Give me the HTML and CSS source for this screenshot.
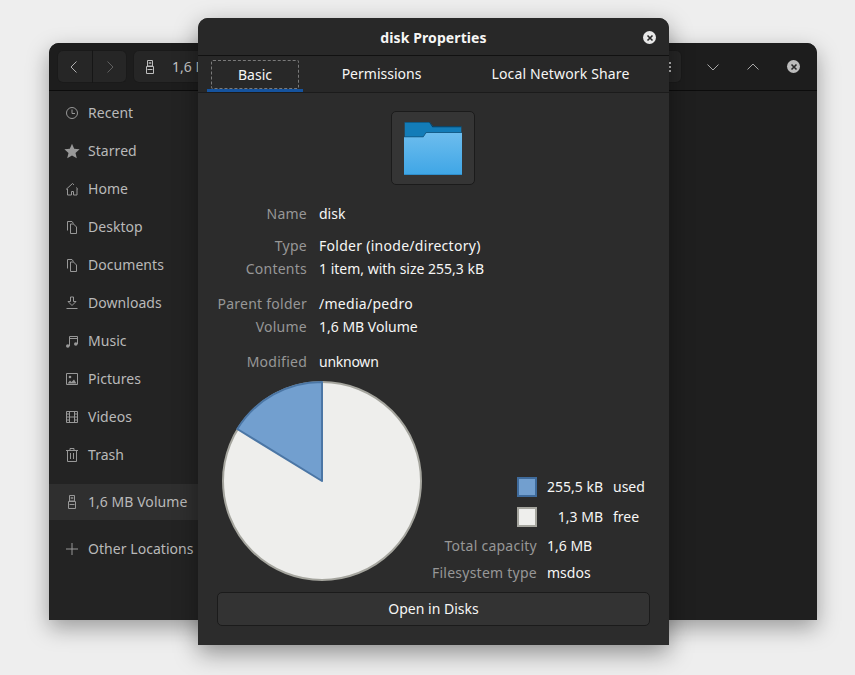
FILE: index.html
```html
<!DOCTYPE html>
<html lang="en">
<head>
    <meta charset="UTF-8">
    <title>disk Properties</title>
    <link rel="stylesheet" href="styles.css">
</head>
<body>

<!-- Files window, behind the dialog -->
<div class="window files">
    <div class="files-header">
        <div class="btn-group">
            <button class="nav-btn">
                <svg width="16" height="16" viewBox="0 0 16 16"><path d="M10.5 2.5 5 8l5.5 5.5" class="line"/></svg>
            </button>
            <button class="nav-btn dim">
                <svg width="16" height="16" viewBox="0 0 16 16"><path d="M5.5 2.5 11 8l-5.5 5.5" class="line"/></svg>
            </button>
        </div>
        <div class="path-bar">
            <svg class="path-icon" width="16" height="16" viewBox="0 0 16 16"><path d="M5.5 1.5h5v5.5h-5zM4.5 7.500h7v7h-7zM5.500 10.500h5" class="line"/><path d="M6.800 3h.9v2h-.9zM8.300 3h.9v2h-.9z" class="fill"/></svg>
            <span>1,6 MB Volume</span>
            <span class="path-menu"></span>
        </div>
        <div class="win-controls">
            <svg width="16" height="16" viewBox="0 0 16 16"><path d="M2.500 5.500 8 11l5.500-5.500" class="line"/></svg>
            <svg width="16" height="16" viewBox="0 0 16 16"><path d="M2.500 10.500 8 5l5.500 5.500" class="line"/></svg>
            <span class="close-btn small"><svg width="14" height="14" viewBox="0 0 14 14"><path d="M4.500 4.500l5 5M9.500 4.500l-5 5" class="x"/></svg></span>
        </div>
    </div>
    <ul class="sidebar">
        <li><svg width="16" height="16" viewBox="0 0 16 16"><circle cx="8" cy="8" r="5.500" class="line"/><path d="M8 4.500V8.500h3" class="line"/></svg>Recent</li>
        <li><svg width="16" height="16" viewBox="0 0 16 16"><path d="M8 .8l2.200 5 5.400.5-4.100 3.600 1.300 5.300L8 12.400l-4.800 2.800 1.300-5.300L.4 6.300l5.400-.5z" class="fill"/></svg>Starred</li>
        <li><svg width="16" height="16" viewBox="0 0 16 16"><path d="M2 8.500 8.500 2.500l1.500 1.400M14 8.300l-2-1.800M3.500 8v6h4v-3.500h2v3.500h3.500V8" class="line"/></svg>Home</li>
        <li><svg width="16" height="16" viewBox="0 0 16 16"><path d="M3.500 11.500v-9h4.500l1.500 2M6.500 14.500v-9.500h3l3 3v6.500z" class="line"/></svg>Desktop</li>
        <li><svg width="16" height="16" viewBox="0 0 16 16"><path d="M3.500 11.500v-9h4.500l1.500 2M6.500 14.500v-9.500h3l3 3v6.500z" class="line"/></svg>Documents</li>
        <li><svg width="16" height="16" viewBox="0 0 16 16"><path d="M2.500 13.500h11M6.500 2v4.500H4l4 4 4-4H9.500V2z" class="line"/></svg>Downloads</li>
        <li><svg width="16" height="16" viewBox="0 0 16 16"><path d="M5.500 13V3.500h8V11M5.500 5.500h8" class="line"/><circle cx="3.800" cy="13" r="1.800" class="fill"/><circle cx="11.800" cy="11" r="1.800" class="fill"/></svg>Music</li>
        <li><svg width="16" height="16" viewBox="0 0 16 16"><path d="M2.500 2.500h11v11h-11z" class="line"/><circle cx="6" cy="6" r="1.300" class="fill"/><path d="M3.500 12.500l2.500-3 1.500 1.500 2.500-2.500 2.500 4z" class="fill"/></svg>Pictures</li>
        <li><svg width="16" height="16" viewBox="0 0 16 16"><path d="M2.500 2.500h11v11h-11zM5.500 2.500v11M10.500 2.500v11M5.500 8h5M2.500 5h3M2.500 8h3M2.500 11h3M10.500 5h3M10.500 8h3M10.500 11h3" class="line"/></svg>Videos</li>
        <li><svg width="16" height="16" viewBox="0 0 16 16"><path d="M2 3.500h12M6 3.500V1.500h4v2M3.500 3.500v11h9v-11M6.500 6v6M9.500 6v6" class="line"/></svg>Trash</li>
        <li class="active"><svg width="16" height="16" viewBox="0 0 16 16"><path d="M5.500 1.500h5v5.500h-5zM4.500 7.500h7v7h-7zM5.500 10.500h5" class="line"/><path d="M6.800 3h.9v2h-.9zM8.300 3h.9v2h-.9z" class="fill"/></svg>1,6 MB Volume</li>
        <li><svg width="16" height="16" viewBox="0 0 16 16"><path d="M8 2v12M2 8h12" class="line"/></svg>Other Locations</li>
    </ul>
</div>

<!-- Properties dialog -->
<div class="window dialog">
    <div class="dialog-title">
        <span>disk Properties</span>
        <span class="close-btn"><svg width="14" height="14" viewBox="0 0 14 14"><path d="M4.500 4.500l5 5M9.500 4.500l-5 5" class="x"/></svg></span>
    </div>
    <div class="tabs">
        <div class="tab active"><span>Basic</span></div>
        <div class="tab perm"><span>Permissions</span></div>
        <div class="tab share"><span>Local Network Share</span></div>
    </div>
    <div class="dialog-body">
        <div class="icon-box">
            <svg width="60" height="54" viewBox="0 0 60 54">
                <defs>
                    <linearGradient id="folderFront" x1="0" y1="0" x2="0" y2="1">
                        <stop offset="0" stop-color="#6dbdee"/>
                        <stop offset="1" stop-color="#3fa6e6"/>
                    </linearGradient>
                </defs>
                <path d="M1.700 0h25l3.300 4.300h28.300V15H1.700z" fill="#137cb8"/>
                <path d="M1.700 0h25l3.300 4.300h28.300v1H29.500L26.200.6H1.700z" fill="#0b3a58"/>
                <path d="M1 15h19l3-4.300h36v42H1z" fill="url(#folderFront)"/>
                <path d="M1 14.500h19l3-4.300h36v.8H23.300l-3 4.300H1z" fill="#0e4f78"/>
                <rect x="1" y="52" width="58" height="1" fill="#2f8fcc"/>
            </svg>
        </div>

        <div class="info">
            <span class="label">Name</span><span>disk</span>
            <span class="label gap-a">Type</span><span class="gap-a stretch">Folder (inode/directory)</span>
            <span class="label">Contents</span><span>1 item, with size 255,3 kB</span>
            <span class="label gap-b">Parent folder</span><span class="gap-b stretch">/media/pedro</span>
            <span class="label">Volume</span><span>1,6 MB Volume</span>
            <span class="label gap-b">Modified</span><span class="gap-b squeeze">unknown</span>
        </div>

        <div class="usage">
            <svg class="pie" width="202" height="202" viewBox="0 0 202 202">
                <circle cx="101" cy="101" r="99" fill="#eeeeec" stroke="#a5a59e" stroke-width="2"/>
                <path d="M101 101V2A99 99 0 0 0 16.300 49z" fill="#729fcf" stroke="#4b76a5" stroke-width="2" stroke-linejoin="round"/>
            </svg>
            <div class="legend">
                <span class="swatch used"></span><span class="size">255,5 kB</span><span>used</span>
                <span class="swatch free"></span><span class="size">1,3 MB</span><span>free</span>
            </div>
            <div class="fs-info">
                <span class="label">Total capacity</span><span>1,6 MB</span>
                <span class="label">Filesystem type</span><span>msdos</span>
            </div>
        </div>

        <button class="disks-btn">Open in Disks</button>
    </div>
</div>

</body>
</html>
```

FILE: styles.css
```css
/* Page */
html, body {
    margin: 0;
    height: 100%;
}

body {
    position: relative;
    width: 855px;
    height: 675px;
    overflow: hidden;
    background: #eeeeee;
    font-family: 'Noto Sans', sans-serif;
    font-size: 14px;
    color: #f6f6f5;
}

.window {
    position: absolute;
    box-sizing: border-box;
    border-radius: 10px 10px 0 0;
}

button {
    font: inherit;
    color: inherit;
}

svg {
    display: block;
    flex: none;
}

.line {
    fill: none;
    stroke: currentColor;
    stroke-width: 1;
}

.fill {
    fill: currentColor;
}

.x {
    fill: none;
    stroke: #2a2a2a;
    stroke-width: 1.6;
}

/* Files window */
.files {
    display: flex;
    flex-direction: column;
    left: 49px;
    top: 43px;
    width: 768px;
    height: 577px;
    background: #1f1f1f;
    overflow: hidden;
    box-shadow: 0 8px 22px rgba(0, 0, 0, 0.35);
}

.files-header {
    display: flex;
    align-items: center;
    flex: none;
    height: 48px;
    padding: 0 8px;
    box-sizing: border-box;
    background: #1d1d1d;
    border-bottom: 1px solid #0c0c0c;
    color: #a8a8a8;
}

.btn-group {
    display: flex;
    height: 33px;
    border-radius: 6px;
    background: #262626;
    box-shadow: inset 0 0 0 1px #1a1a1a;
}

.nav-btn {
    width: 35px;
    padding: 0 0 0 9px;
    background: none;
    border: 0;
    color: #b0b0b0;
}

.nav-btn + .nav-btn {
    border-left: 1px solid #161616;
}

.nav-btn.dim {
    color: #5f5f5f;
}

.path-bar {
    display: flex;
    align-items: center;
    width: 540px;
    height: 33px;
    margin-left: 6px;
    padding-left: 9px;
    border-radius: 6px;
    background: #262626;
    box-shadow: inset 0 0 0 1px #1a1a1a;
    color: #c4c4c4;
}

.path-icon {
    margin-right: 14px;
    color: #bdbdbd;
}

.path-menu {
    margin-left: auto;
    margin-right: 11px;
    width: 2px;
    height: 2px;
    background: #b8b8b8;
    box-shadow: 0 -4px 0 #b8b8b8, 0 4px 0 #b8b8b8;
}

.win-controls {
    display: flex;
    align-items: center;
    gap: 24px;
    margin-left: 23px;
    color: #a8a8a8;
}

.win-controls .close-btn {
    margin-left: 2px;
}

.sidebar {
    flex: 1;
    width: 240px;
    list-style: none;
    margin: 0;
    padding: 3px 0 0;
    background: #232323;
    color: #b9b9b9;
    letter-spacing: 0.05px;
}

.sidebar li {
    display: flex;
    align-items: center;
    gap: 8px;
    height: 38px;
    padding-left: 15px;
    line-height: 38px;
}

.sidebar svg {
    color: #989898;
}

.sidebar .active {
    height: 36px;
    margin-top: 10px;
    background: #2f2f2f;
}

.sidebar .active + li {
    margin-top: 10px;
}

.close-btn {
    display: flex;
    align-items: center;
    justify-content: center;
    width: 13px;
    height: 13px;
    border-radius: 50%;
    background: #e8e8e8;
}

.close-btn.small {
    background: #bcbcbc;
}

/* Properties dialog */
.dialog {
    left: 198px;
    top: 18px;
    width: 471px;
    height: 627px;
    background: #2c2c2c;
    box-shadow: 0 8px 24px rgba(0, 0, 0, 0.4);
}

.dialog-title {
    display: flex;
    justify-content: center;
    align-items: center;
    position: relative;
    height: 38px;
    padding-top: 2px;
    box-sizing: border-box;
    background: #282828;
    border-bottom: 1px solid #111111;
    border-radius: 10px 10px 0 0;
    font-weight: 700;
    letter-spacing: 0.1px;
}

.dialog-title .close-btn {
    position: absolute;
    right: 13px;
    top: 13px;
}

.tabs {
    display: flex;
    height: 37px;
    box-sizing: border-box;
    background: #282828;
    border-bottom: 1px solid #1b1b1b;
}

.tab {
    display: flex;
    justify-content: center;
    align-items: center;
    box-sizing: border-box;
    padding-bottom: 1px;
}

.tab.active {
    position: relative;
    width: 96px;
    margin-left: 9px;
    border-bottom: 3px solid #15539e;
    padding: 3px 0 0;
}

/* dotted keyboard focus frame */
.tab.active::before {
    content: '';
    position: absolute;
    left: 4px;
    right: 4px;
    top: 4px;
    bottom: 0;
    border: 1px dashed #7a7a7a;
    border-radius: 2px;
}

.tab.perm {
    width: 157px;
}

.tab.share {
    width: 201px;
    letter-spacing: 0.15px;
}

.dialog-body {
    display: flex;
    flex-direction: column;
    padding: 18px 19px 0;
}

.icon-box {
    display: flex;
    justify-content: center;
    align-items: center;
    align-self: center;
    box-sizing: border-box;
    width: 84px;
    height: 74px;
    margin-left: -1px;
    padding-top: 1px;
    background: #353535;
    border: 1px solid #1b1b1b;
    border-radius: 5px;
}

.info {
    display: grid;
    grid-template-columns: 90px 1fr;
    column-gap: 12px;
    margin-top: 17px;
    line-height: 23px;
}

.label {
    text-align: right;
    white-space: nowrap;
    color: #979797;
    letter-spacing: 0.25px;
}

.gap-a {
    margin-top: 9px;
}

.gap-b {
    margin-top: 12px;
}

.stretch {
    letter-spacing: 0.28px;
}

.squeeze {
    letter-spacing: -0.25px;
}

/* Pie chart and its legend */
.usage {
    display: grid;
    grid-template-columns: 210px 1fr;
    grid-template-rows: 1fr auto auto;
    margin-top: 7px;
    height: 206px;
}

.pie {
    grid-row: 1 / 4;
    margin-left: 4px;
}

.legend {
    grid-column: 2;
    grid-row: 2;
    display: grid;
    grid-template-columns: 20px 56px auto;
    grid-auto-rows: 20px;
    row-gap: 10px;
    column-gap: 10px;
    justify-content: start;
    margin-left: 90px;
    line-height: 20px;
}

.swatch {
    box-sizing: border-box;
    width: 20px;
    height: 20px;
    border: 2px solid;
}

.swatch.used {
    background: #729fcf;
    border-color: #3f6b9c;
}

.swatch.free {
    background: #eeeeec;
    border-color: #a5a59e;
}

.size {
    text-align: right;
}

.fs-info {
    grid-column: 2;
    grid-row: 3;
    display: grid;
    grid-template-columns: 110px auto;
    grid-auto-rows: 27px;
    column-gap: 10px;
    margin-top: 5px;
    line-height: 27px;
}

.disks-btn {
    height: 34px;
    margin-top: 6px;
    padding: 0 0 2px;
    background: #333333;
    border: 1px solid #1b1b1b;
    border-radius: 5px;
    color: #f6f6f5;
}
```
